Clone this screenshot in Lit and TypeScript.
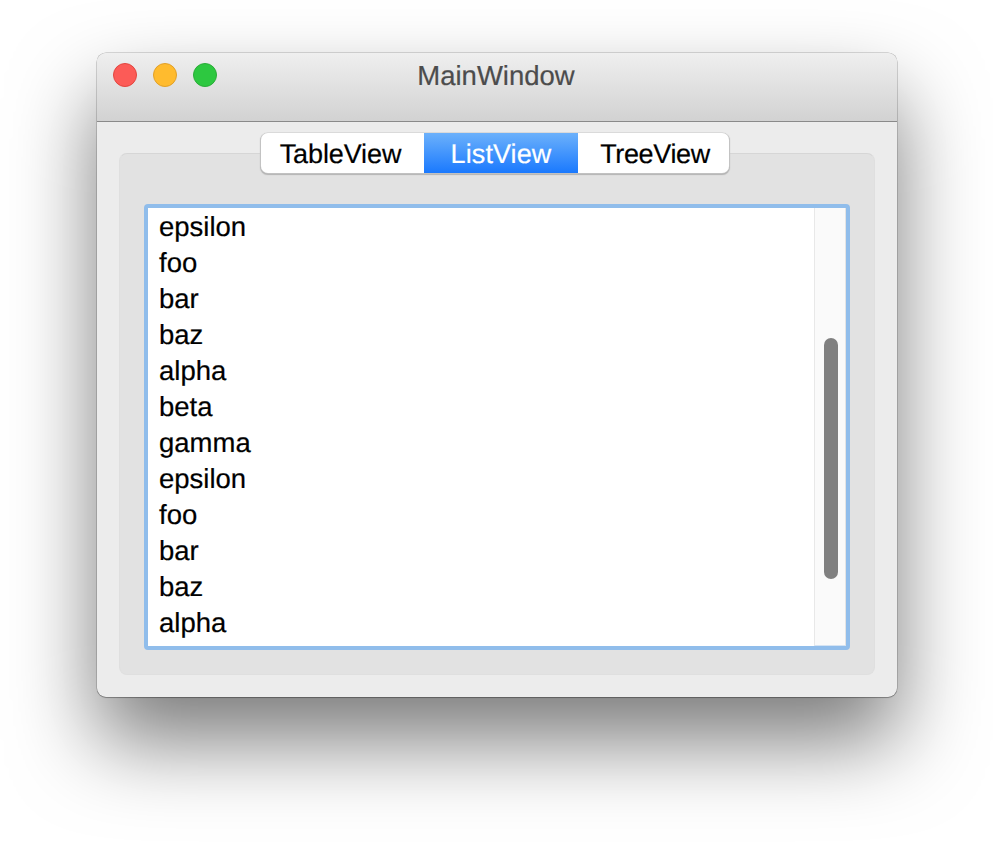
import { LitElement, html, css } from "lit";
import { customElement } from "lit/decorators.js";

const ROWS = ["epsilon", "foo", "bar", "baz", "alpha", "beta", "gamma", "epsilon", "foo", "bar", "baz", "alpha"];

@customElement("app-root")
export class AppRoot extends LitElement {
  static styles = css`
    :host {
      display: block;
      width: 993px;
      height: 845px;
      overflow: hidden;
      background: #fff;
      font-family: "Liberation Sans", Arial, sans-serif;
      font-size: 27.5px;
      color: #000;
      text-rendering: geometricPrecision;
      -webkit-text-stroke: 0.2px currentColor;
    }
    .page { padding: 53px 0 0 97px; }
    .window {
      width: 800px;
      height: 644px;
      box-sizing: border-box;
      background: #ececec;
      border-radius: 9px;
      box-shadow: 0 0 0 0.5px rgba(0,0,0,.28), 0 1px 1px rgba(0,0,0,.22), 0 44px 84px rgba(0,0,0,.52);
      display: flex;
      flex-direction: column;
    }
    .titlebar {
      height: 69px;
      flex: none;
      box-sizing: border-box;
      border-radius: 9px 9px 0 0;
      border-bottom: 1px solid #8a8a8a;
      background: linear-gradient(#efefef, #d2d2d2);
      display: flex;
      align-items: flex-start;
      position: relative;
    }
    .lights { display: flex; gap: 16px; padding: 10px 0 0 16px; }
    .light { width: 24px; height: 24px; box-sizing: border-box; border-radius: 50%; border: 1px solid; }
    .red { background: #fc5b57; border-color: #e2463f; }
    .yellow { background: #ffbb2e; border-color: #e1a029; }
    .green { background: #2dc840; border-color: #2bac38; }
    .title {
      position: absolute;
      left: 0; right: 0; top: 7px;
      text-align: center;
      color: #4c4c4c;
      line-height: 32px;
      padding-right: 2px;
    }
    .body { flex: 1; padding: 31px 22px 22px 22px; display: flex; flex-direction: column; }
    .group {
      flex: 1;
      box-sizing: border-box;
      background: #e2e2e2;
      border: 1px solid #dfdfdf;
      border-top-color: #d6d6d6;
      border-radius: 8px;
      position: relative;
      padding: 50px 24px 24px 24px;
      display: flex;
    }
    .tabs {
      position: absolute;
      top: -21px;
      left: 141px;
      width: 468px;
      height: 40px;
      box-sizing: border-box;
      display: flex;
      background: #fff;
      border-radius: 7px;
      box-shadow: 0 0 0 0.5px #cdcdcd, 0 1px 1px 0.5px #b4b4b4;
      overflow: hidden;
      font-size: 27px;
    }
    .tab { display: flex; align-items: center; justify-content: center; padding-top: 2px; box-sizing: border-box; }
    .tab1 { width: 163px; padding-right: 4px; letter-spacing: -0.1px; }
    .tab2 { width: 154px; color: #fff; background: linear-gradient(#6cb1fb, #1a79fe); letter-spacing: 0.1px; }
    .tab3 { flex: 1; padding-left: 3px; letter-spacing: -0.35px; }
    .list {
      flex: 1;
      box-sizing: border-box;
      border: 4px solid #90bdeb;
      border-radius: 4px;
      background: #fff;
      display: flex;
      overflow: hidden;
    }
    .rows { flex: 1; padding: 1px 0 0 11px; overflow: hidden; }
    .row { height: 36px; line-height: 36px; }
    .track {
      width: 32px;
      flex: none;
      box-sizing: border-box;
      background: #fafafa;
      border-left: 1px solid #e8e8e8;
      border-right: 1px solid #e4e4e4;
      border-bottom: 1px solid #d4e3f3;
      padding: 130px 0 0 9px;
    }
    .thumb { width: 14px; height: 241px; border-radius: 7px; background: #808080; }
  `;

  render() {
    return html`
      <div class="page">
        <div class="window">
          <div class="titlebar">
            <div class="lights">
              <div class="light red"></div>
              <div class="light yellow"></div>
              <div class="light green"></div>
            </div>
            <div class="title">MainWindow</div>
          </div>
          <div class="body">
            <div class="group">
              <div class="tabs">
                <div class="tab tab1">TableView</div>
                <div class="tab tab2">ListView</div>
                <div class="tab tab3">TreeView</div>
              </div>
              <div class="list">
                <div class="rows">${ROWS.map((r) => html`<div class="row">${r}</div>`)}</div>
                <div class="track"><div class="thumb"></div></div>
              </div>
            </div>
          </div>
        </div>
      </div>
    `;
  }
}
